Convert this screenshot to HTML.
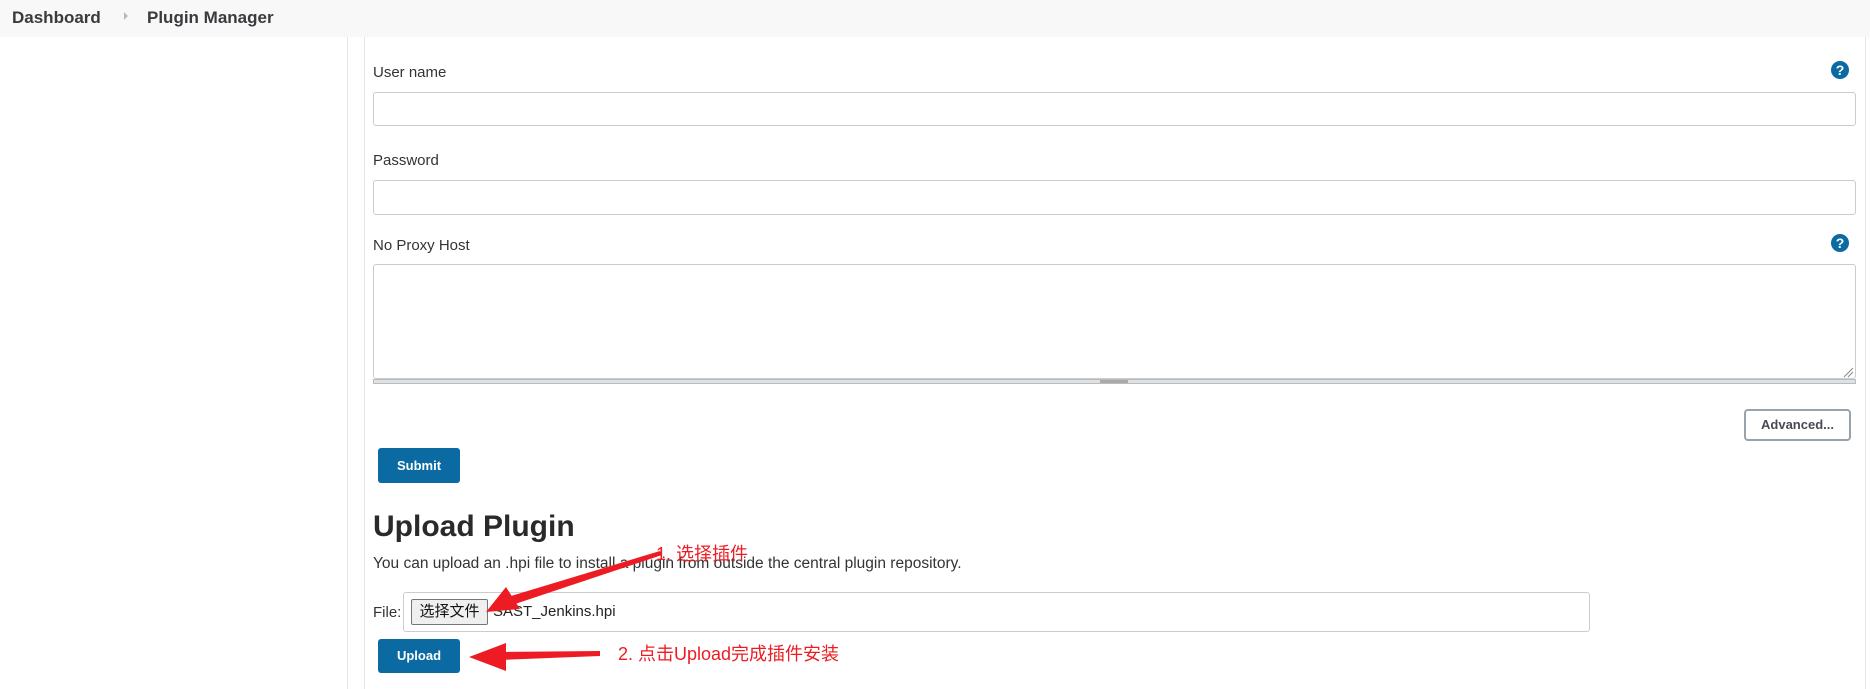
<!DOCTYPE html>
<html><head><meta charset="utf-8"><style>
*{box-sizing:border-box;margin:0;padding:0}
body{width:1870px;height:689px;background:#fff;font-family:"Liberation Sans","Noto Sans CJK SC",sans-serif;color:#333;position:relative;overflow:hidden}
.abs{position:absolute}
.hdr{left:0;top:0;width:1870px;height:37px;background:#f8f8f8}
.bc{font-weight:bold;font-size:17px;color:#3a3a3f;top:8px}
.vl{top:37px;bottom:0;width:1px;background:#e6e6e6}
.lbl{font-size:15px;color:#333}
.inp{border:1px solid #ccc;border-radius:3px;background:#fff}
.help{width:18px;height:18px;border-radius:50%;background:#0b6aa2;color:#fff;font-weight:bold;font-size:14px;text-align:center;line-height:18px}
.btn{background:#0b6aa2;color:#fff;font-weight:bold;font-size:13px;border-radius:3px;text-align:center}
.red{color:#ed1c24;font-size:18px;font-family:"Liberation Sans","Noto Sans CJK SC",sans-serif}
</style></head><body>
<div class="abs hdr"></div>
<div class="abs bc" style="left:12px">Dashboard</div>
<div class="abs" style="left:124px;top:12px;width:0;height:0;border-left:4px solid #bbb;border-top:4px solid transparent;border-bottom:4px solid transparent"></div>
<div class="abs bc" style="left:147px">Plugin Manager</div>
<div class="abs vl" style="left:347px"></div>
<div class="abs vl" style="left:364px"></div>
<div class="abs vl" style="left:1865px"></div>

<div class="abs lbl" style="left:373px;top:64px">User name</div>
<div class="abs help" style="left:1831px;top:61px">?</div>
<div class="abs inp" style="left:373px;top:92px;width:1483px;height:34px"></div>
<div class="abs lbl" style="left:373px;top:152px">Password</div>
<div class="abs inp" style="left:373px;top:180px;width:1483px;height:35px"></div>
<div class="abs lbl" style="left:373px;top:237px">No Proxy Host</div>
<div class="abs help" style="left:1831px;top:234px">?</div>
<div class="abs inp" style="left:373px;top:264px;width:1483px;height:115px"></div>
<div class="abs" style="left:373px;top:379px;width:1483px;height:5px;background:#dde2e6;border:1px solid #bbb"></div>
<div class="abs" style="left:1100px;top:380px;width:28px;height:3px;background:#aaa"></div>
<svg class="abs" style="left:1842px;top:366px" width="12" height="12"><path d="M2 11L11 2M6 11L11 6" stroke="#888" stroke-width="1"/></svg>

<div class="abs" style="left:1744px;top:409px;width:107px;height:32px;border:2px solid #97a4ae;border-radius:4px;font-weight:bold;font-size:13px;color:#4a4a55;text-align:center;line-height:28px">Advanced...</div>
<div class="abs btn" style="left:378px;top:448px;width:82px;height:35px;line-height:35px">Submit</div>

<div class="abs" style="left:373px;top:510px;font-size:30px;font-weight:bold;color:#2a2a2a">Upload Plugin</div>
<div class="abs" style="left:373px;top:555px;font-size:15.5px;color:#333">You can upload an .hpi file to install a plugin from outside the central plugin repository.</div>

<div class="abs lbl" style="left:373px;top:604px">File:</div>
<div class="abs inp" style="left:403px;top:592px;width:1187px;height:40px"></div>
<div class="abs" style="left:411px;top:599px;width:77px;height:26px;background:#efefef;border:1px solid #767676;border-radius:2px;font-size:15px;text-align:center;line-height:24px;color:#111">选择文件</div>
<div class="abs" style="left:493px;top:603px;font-size:15px;color:#222">SAST_Jenkins.hpi</div>

<div class="abs btn" style="left:378px;top:639px;width:82px;height:34px;line-height:34px">Upload</div>

<div class="abs red" style="left:656px;top:540px">1. 选择插件</div>
<div class="abs red" style="left:618px;top:640px">2. 点击Upload完成插件安装</div>
<svg class="abs" style="left:0;top:0" width="1870" height="689">
<path d="M660 551 L662 555 L515 604 L511 596 Z" fill="#ed1c24"/>
<path d="M486 612 L506 587 L520 609 Z" fill="#ed1c24"/>
<path d="M600 651 L600 656 L500 660 L500 652 Z" fill="#ed1c24"/>
<path d="M469 657 L506 643 L506 671 Z" fill="#ed1c24"/>
</svg>
</body></html>
